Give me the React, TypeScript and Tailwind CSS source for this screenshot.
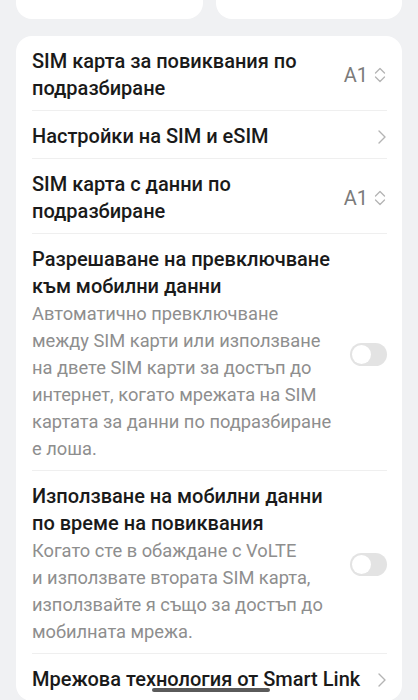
import React from "react";

const font = { fontFamily: "Roboto, 'Noto Sans', sans-serif" };

function UpDown() {
  return (
    <svg width="14" height="18" viewBox="0 0 14 18" fill="none" stroke="#b4b4b4" strokeWidth="1.3" strokeLinecap="round" strokeLinejoin="round">
      <path d="M2.5 7 L7 2.5 L11.5 7" />
      <path d="M2.5 11 L7 15.5 L11.5 11" />
    </svg>
  );
}

function Chevron() {
  return (
    <svg width="10" height="16" viewBox="0 0 10 16" fill="none" stroke="#b4b4b4" strokeWidth="1.4" strokeLinecap="round" strokeLinejoin="round">
      <path d="M2 2 L8 8 L2 14" />
    </svg>
  );
}

function Toggle() {
  return (
    <div className="w-[37px] h-[23px] rounded-full bg-[#e3e3e3] flex items-center px-[2px] shrink-0">
      <div className="w-[19px] h-[19px] rounded-full bg-white" />
    </div>
  );
}

function Lines({ lines, cls }: { lines: string[]; cls: string }) {
  return (
    <div className={cls}>
      {lines.map((l, i) => (
        <div key={i} className="whitespace-nowrap">{l}</div>
      ))}
    </div>
  );
}

const titleCls = "text-[20px] leading-[27px] font-medium text-[#1a1a1a]";
const descCls = "text-[18.3px] leading-[27px] text-[#8e8e8e]";
const rowCls = "flex items-center justify-between pt-[12px] pb-[8px]";

export default function App() {
  return (
    <div className="w-[418px] h-[700px] bg-[#f0f1f3] overflow-hidden relative" style={font}>
      <div className="flex gap-[13px] px-4 -mt-[20px]">
        <div className="flex-1 h-[39px] bg-white rounded-[16px]" />
        <div className="flex-1 h-[39px] bg-white rounded-[16px]" />
      </div>
      <div className="mx-4 mt-[17px] bg-white rounded-[16px] pl-4 pr-[15px]">
        <div className={rowCls + " border-b border-[#efefef]"}>
          <Lines lines={["SIM карта за повиквания по", "подразбиране"]} cls={titleCls} />
          <div className="flex items-center gap-[5px] text-[20px] text-[#7b7b7b]">
            <span>A1</span>
            <UpDown />
          </div>
        </div>
        <div className={rowCls + " border-b border-[#efefef]"}>
          <Lines lines={["Настройки на SIM и eSIM"]} cls={titleCls} />
          <Chevron />
        </div>
        <div className={rowCls + " border-b border-[#efefef]"}>
          <Lines lines={["SIM карта с данни по", "подразбиране"]} cls={titleCls} />
          <div className="flex items-center gap-[5px] text-[20px] text-[#7b7b7b]">
            <span>A1</span>
            <UpDown />
          </div>
        </div>
        <div className={rowCls + " border-b border-[#efefef]"}>
          <div>
            <Lines lines={["Разрешаване на превключване", "към мобилни данни"]} cls={titleCls} />
            <Lines
              lines={[
                "Автоматично превключване",
                "между SIM карти или използване",
                "на двете SIM карти за достъп до",
                "интернет, когато мрежата на SIM",
                "картата за данни по подразбиране",
                "е лоша.",
              ]}
              cls={descCls}
            />
          </div>
          <Toggle />
        </div>
        <div className={rowCls + " border-b border-[#efefef]"}>
          <div>
            <Lines lines={["Използване на мобилни данни", "по време на повиквания"]} cls={titleCls} />
            <Lines
              lines={[
                "Когато сте в обаждане с VoLTE",
                "и използвате втората SIM карта,",
                "използвайте я също за достъп до",
                "мобилната мрежа.",
              ]}
              cls={descCls}
            />
          </div>
          <Toggle />
        </div>
        <div className={rowCls}>
          <Lines lines={["Мрежова технология от Smart Link"]} cls={titleCls} />
          <Chevron />
        </div>
      </div>
      <div className="absolute left-[152px] bottom-[8px] w-[118px] h-[4px] rounded-full bg-[#5a5a5a]" />
    </div>
  );
}
